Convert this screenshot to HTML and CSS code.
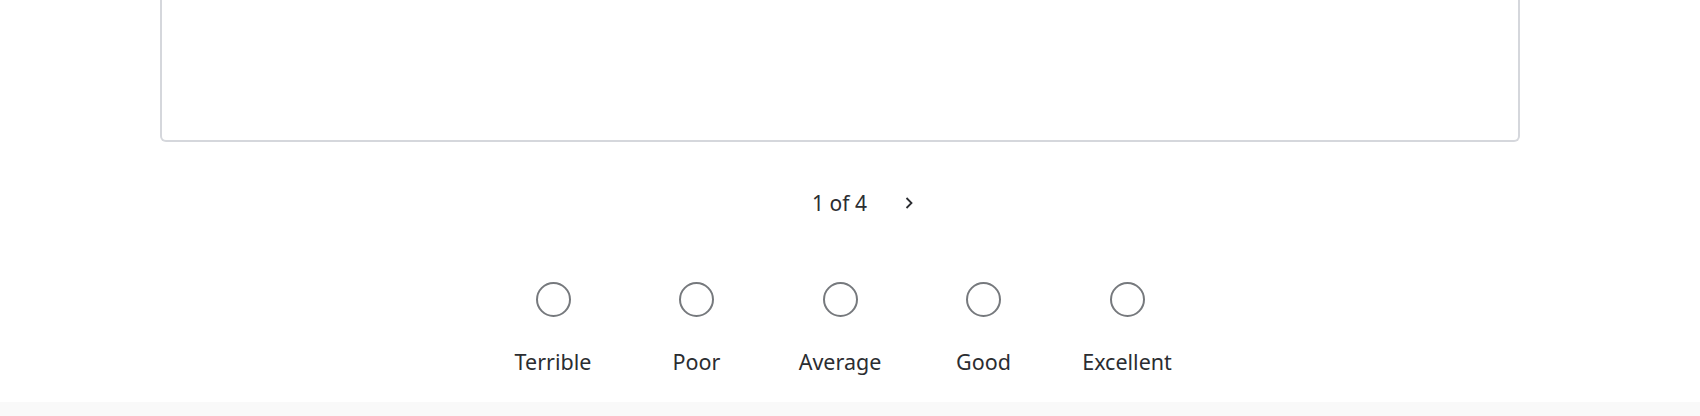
FILE: index.html
```html
<!DOCTYPE html>
<html lang="en">
<head>
    <meta charset="UTF-8">
    <title>Rating</title>
    <link rel="stylesheet" href="styles.css">
</head>
<body>
<div class="page">
    <div class="card"></div>

    <div class="pager">
        <span class="pager-text">1 of 4</span>
        <svg class="chevron" viewBox="0 0 10 14">
            <path d="M2.5 2 L7.5 7 L2.5 12" fill="none" stroke="currentColor" stroke-width="1.8"/>
        </svg>
    </div>

    <div class="rating">
        <label class="option"><span class="radio"></span><span class="label">Terrible</span></label>
        <label class="option"><span class="radio"></span><span class="label">Poor</span></label>
        <label class="option"><span class="radio"></span><span class="label">Average</span></label>
        <label class="option"><span class="radio"></span><span class="label">Good</span></label>
        <label class="option"><span class="radio"></span><span class="label">Excellent</span></label>
    </div>
</div>
<div class="footer"></div>
</body>
</html>
```

FILE: styles.css
```css
html, body {
    margin: 0;
    padding: 0;
    background: #fff;
    overflow: hidden;
}

body {
    font-family: "Noto Sans", "Open Sans", sans-serif;
    color: #2b2d31;
    height: 416px;
}

.page {
    width: 1680px;
    height: 402px;
}

.card {
    margin: 0 160px;
    height: 142px;
    border: 2px solid #d5d7dc;
    border-top: 0;
    border-radius: 0 0 6px 6px;
    box-sizing: border-box;
}

.pager {
    display: flex;
    justify-content: center;
    align-items: center;
    margin-top: 49px;
    height: 24px;
    padding-left: 46px;
}

.pager-text {
    font-size: 21px;
    line-height: 24px;
}

.chevron {
    width: 10px;
    height: 14px;
    margin-left: 37px;
    color: #2b2d31;
}

.rating {
    display: flex;
    justify-content: center;
    margin-top: 67px;
}

.option {
    width: 143.5px;
    display: flex;
    flex-direction: column;
    align-items: center;
}

.radio {
    width: 35px;
    height: 35px;
    border: 2.5px solid #76797d;
    border-radius: 50%;
    box-sizing: border-box;
}

.label {
    margin-top: 33px;
    font-size: 21.5px;
    line-height: 24px;
}

.footer {
    height: 14px;
    background: #f9f9f9;
}
```
